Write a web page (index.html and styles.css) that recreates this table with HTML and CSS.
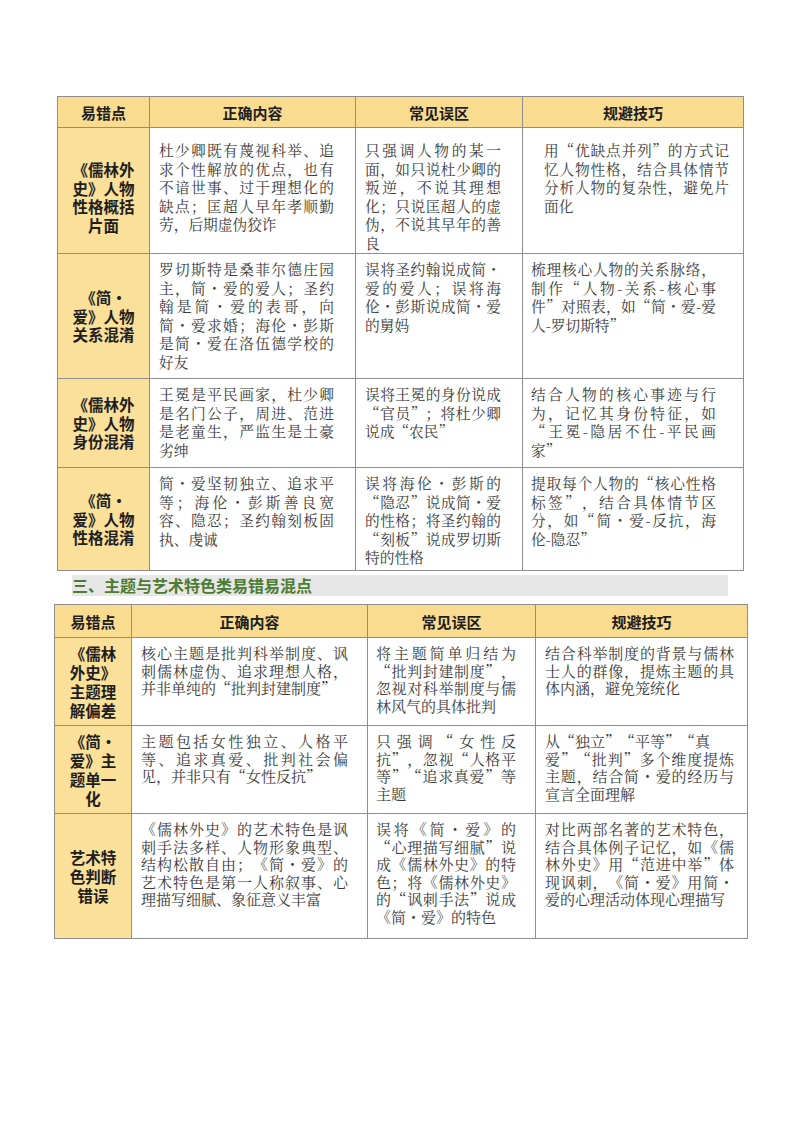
FILE: index.html
```html
<!DOCTYPE html>
<html lang="zh-CN">
<head>
<meta charset="utf-8">
<title>易错易混点</title>
<link rel="stylesheet" href="styles.css">
</head>
<body>
<div class="page">
  <table class="grid t1">
    <colgroup><col class="w1"><col class="w2"><col class="w3"><col class="w4"></colgroup>
    <thead>
      <tr><th>易错点</th><th>正确内容</th><th>常见误区</th><th>规避技巧</th></tr>
    </thead>
    <tbody>
      <tr class="r1">
        <td class="key">《儒林外史》人物性格概括片面</td>
        <td class="c2">杜少卿既有蔑视科举、追求个性解放的优点，也有不谙世事、过于理想化的缺点；匡超人早年孝顺勤劳，后期虚伪狡诈</td>
        <td class="c3">只强调人物的某一面，如只说杜少卿的叛逆，不说其理想化；只说匡超人的虚伪，不说其早年的善良</td>
        <td class="c4 shift">用&#8203;“优缺点并列”&#8203;的方式记忆人物性格，结合具体情节分析人物的复杂性，避免片面化</td>
      </tr>
      <tr class="r2">
        <td class="key">《简・爱》人物关系混淆</td>
        <td class="c2">罗切斯特是桑菲尔德庄园主，简・爱的爱人；圣约翰是简・爱的表哥，向简・爱求婚；海伦・彭斯是简・爱在洛伍德学校的好友</td>
        <td class="c3">误将圣约翰说成简・爱的爱人；误将海伦・彭斯说成简・爱的舅妈</td>
        <td class="c4">梳理核心人物的关系脉络，制作&#8203;“人物-关系-核心事件”&#8203;对照表，如&#8203;“简・爱-爱人-罗切斯特”</td>
      </tr>
      <tr class="r3">
        <td class="key">《儒林外史》人物身份混淆</td>
        <td class="c2">王冕是平民画家，杜少卿是名门公子，周进、范进是老童生，严监生是土豪劣绅</td>
        <td class="c3">误将王冕的身份说成&#8203;“官员”；将杜少卿说成&#8203;“农民”</td>
        <td class="c4">结合人物的核心事迹与行为，记忆其身份特征，如&#8203;“王冕-隐居不仕-平民画家”</td>
      </tr>
      <tr class="r4">
        <td class="key">《简・爱》人物性格混淆</td>
        <td class="c2">简・爱坚韧独立、追求平等；海伦・彭斯善良宽容、隐忍；圣约翰刻板固执、虔诚</td>
        <td class="c3">误将海伦・彭斯的&#8203;“隐忍”&#8203;说成简・爱的性格；将圣约翰的&#8203;“刻板”&#8203;说成罗切斯特的性格</td>
        <td class="c4">提取每个人物的&#8203;“核心性格标签”，结合具体情节区分，如&#8203;“简・爱-反抗，海伦-隐忍”</td>
      </tr>
    </tbody>
  </table>

  <h2 class="section-title">三、主题与艺术特色类易错易混点</h2>

  <table class="grid t2">
    <colgroup><col class="w1"><col class="w2"><col class="w3"><col class="w4"></colgroup>
    <thead>
      <tr><th>易错点</th><th>正确内容</th><th>常见误区</th><th>规避技巧</th></tr>
    </thead>
    <tbody>
      <tr class="r1">
        <td class="key">《儒林外史》主题理解偏差</td>
        <td class="c2">核心主题是批判科举制度、讽刺儒林虚伪、追求理想人格，并非单纯的&#8203;“批判封建制度”</td>
        <td class="c3">将主题简单归结为&#8203;“批判封建制度”，忽视对科举制度与儒林风气的具体批判</td>
        <td class="c4">结合科举制度的背景与儒林士人的群像，提炼主题的具体内涵，避免笼统化</td>
      </tr>
      <tr class="r2">
        <td class="key">《简・爱》主题单一化</td>
        <td class="c2">主题包括女性独立、人格平等、追求真爱、批判社会偏见，并非只有&#8203;“女性反抗”</td>
        <td class="c3">只强调&#8203;“女性反抗”，忽视&#8203;“人格平等”&#8203;“追求真爱”&#8203;等主题</td>
        <td class="c4">从“独立”&#8203;“平等”&#8203;“真<br>爱”&#8203;“批判”&#8203;多个维度提炼主题，结合简・爱的经历与宣言全面理解</td>
      </tr>
      <tr class="r3">
        <td class="key">艺术特色判断错误</td>
        <td class="c2">《儒林外史》的艺术特色是讽刺手法多样、人物形象典型、结构松散自由；《简・爱》的艺术特色是第一人称叙事、心理描写细腻、象征意义丰富</td>
        <td class="c3">误将《简・爱》的&#8203;“心理描写细腻”&#8203;说成《儒林外史》的特色；将《儒林外史》的&#8203;“讽刺手法”&#8203;说成《简・爱》的特色</td>
        <td class="c4">对比两部名著的艺术特色，结合具体例子记忆，如《儒林外史》用&#8203;“范进中举”&#8203;体现讽刺，《简・爱》用简・爱的心理活动体现心理描写</td>
      </tr>
    </tbody>
  </table>
</div>
</body>
</html>
```

FILE: styles.css
```css
html, body {
  margin: 0;
  padding: 0;
  background: #ffffff;
}

body {
  font-family: "Noto Serif CJK SC", "Noto Sans CJK SC", serif;
  color: #3a3a3a;
}

.page {
  width: 800px;
  height: 1132px;
  padding-top: 96px;
  box-sizing: border-box;
}

.grid {
  border-collapse: collapse;
  table-layout: fixed;
  line-break: strict;
  text-spacing-trim: space-all;
}

.grid th,
.grid td {
  border: 1px solid #8e8e8e;
  padding: 0;
}

.grid th {
  background: #fadc90;
  font-family: "Noto Sans CJK SC", sans-serif;
  font-weight: 700;
  font-size: 15px;
  color: #1e1e1e;
  text-align: center;
  vertical-align: middle;
}

.grid td {
  vertical-align: top;
  text-align: justify;
  padding-top: 6px;
}

.grid td.key {
  background: #fbe09a;
  font-family: "Noto Sans CJK SC", sans-serif;
  font-weight: 700;
  color: #1e1e1e;
  text-align: center;
  vertical-align: middle;
  padding: 0 8px;
}

/* ---------- table 1 ---------- */
.t1 {
  width: 686px;
  margin-left: 57px;
}
.t1 .w1 { width: 92px; }
.t1 .w2 { width: 206px; }
.t1 .w3 { width: 167px; }
.t1 .w4 { width: 221px; }

.t1 th { height: 30px; }
.t1 td { font-size: 14.7px; line-height: 18.6px; }
.t1 td.key { font-size: 15.5px; line-height: 18.5px; padding: 0 9px; }

.t1 .r1 { height: 126px; }
.t1 .r2 { height: 125px; }
.t1 .r3 { height: 89px; }
.t1 .r4 { height: 103px; }

.t1 .r1 td { padding-top: 13px; }

.t1 .c2 { padding-left: 9px; padding-right: 21px; }
.t1 .c3 { padding-left: 9px; padding-right: 21px; }
.t1 .c4 { padding-left: 8px; padding-right: 27px; }
.t1 .c4.shift { padding-left: 21px; padding-right: 14px; }

/* ---------- section title ---------- */
.section-title {
  margin: 4px 0 0 72px;
  width: 656px;
  height: 21px;
  background: #e7e7e7;
  font-family: "Noto Sans CJK SC", sans-serif;
  font-weight: 700;
  font-size: 16px;
  line-height: 21px;
  color: #4d7b31;
}

/* ---------- table 2 ---------- */
.t2 {
  width: 693px;
  margin: 8px 0 0 54px;
}
.t2 .w1 { width: 77px; }
.t2 .w2 { width: 236px; }
.t2 .w3 { width: 168px; }
.t2 .w4 { width: 212px; }

.t2 th { height: 32px; }
.t2 td { font-size: 15px; line-height: 17.6px; }
.t2 td.key { font-size: 15.5px; line-height: 19px; }

.t2 .r1 { height: 88px; }
.t2 .r2 { height: 88px; }
.t2 .r3 { height: 125px; }

.t2 .c2 { padding-left: 9px; padding-right: 19px; }
.t2 .c3 { padding-left: 8px; padding-right: 19px; }
.t2 .c4 { padding-left: 9px; padding-right: 13px; }
```
